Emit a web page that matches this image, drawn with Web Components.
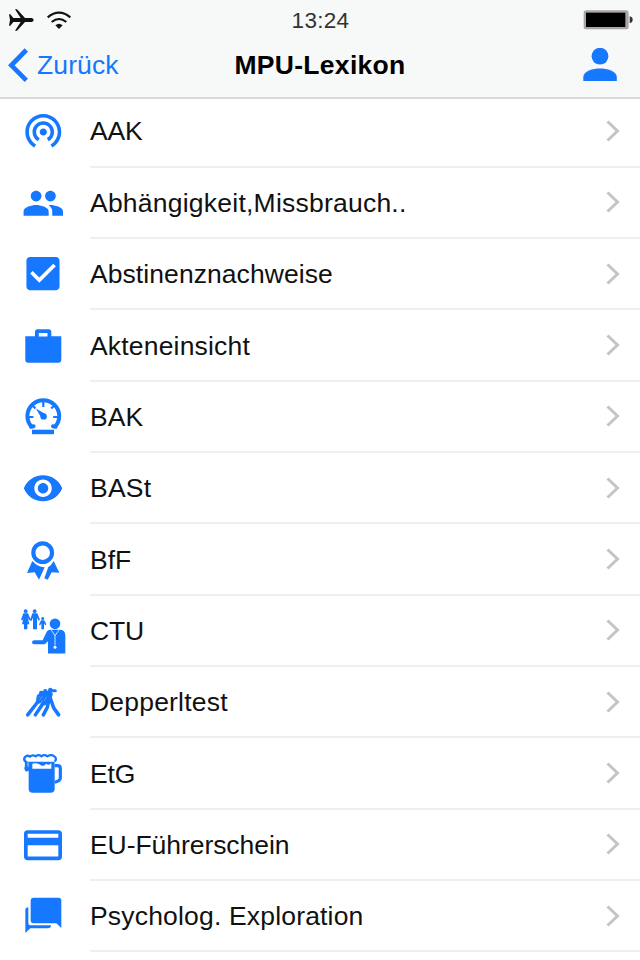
<!DOCTYPE html>
<html lang="de">
<head>
  <meta charset="utf-8">
  <title>MPU-Lexikon</title>
  <style>
    body {
      margin: 0;
      height: 960px;
      overflow: hidden;
      background: #fff;
      color: #111;
      font-family: "Liberation Sans", Arial, sans-serif;
    }
  </style>
</head>
<body>
  <mpu-header>
    <span slot="time">13:24</span>
    <span slot="back">Zurück</span>
    <span slot="title">MPU-Lexikon</span>
  </mpu-header>
  <mpu-list>
    <mpu-item icon="tether" style="--tracking: -.2px">AAK</mpu-item>
    <mpu-item icon="people" style="--tracking: .23px">Abhängigkeit,Missbrauch..</mpu-item>
    <mpu-item icon="check" style="--tracking: .07px">Abstinenznachweise</mpu-item>
    <mpu-item icon="work" style="--tracking: .18px">Akteneinsicht</mpu-item>
    <mpu-item icon="gauge" style="--tracking: .1px">BAK</mpu-item>
    <mpu-item icon="eye" style="--tracking: .2px">BASt</mpu-item>
    <mpu-item icon="ribbon" style="--tracking: 0">BfF</mpu-item>
    <mpu-item icon="doctor" style="--tracking: -.1px">CTU</mpu-item>
    <mpu-item icon="crowd" style="--tracking: .2px">Depperltest</mpu-item>
    <mpu-item icon="beer" style="--tracking: -.2px">EtG</mpu-item>
    <mpu-item icon="card" style="--tracking: -.06px">EU-Führerschein</mpu-item>
    <mpu-item icon="chat" style="--tracking: .18px">Psycholog. Exploration</mpu-item>
  </mpu-list>

  <script>
    'use strict';

    (function() {
      // row icons: [viewBox, markup], all painted with currentColor
      const icons = {
        tether: ['-1.5 -.89 26.67 26.67', '<path d="M12 11c-1.1 0-2 .9-2 2s.9 2 2 2 2-.9 2-2-.9-2-2-2zm6 2c0-3.31-2.69-6-6-6s-6 2.69-6 6c0 2.22 1.21 4.15 3 5.19l1-1.74c-1.19-.7-2-1.97-2-3.45 0-2.21 1.79-4 4-4s4 1.79 4 4c0 1.48-.81 2.75-2 3.45l1 1.74c1.79-1.04 3-2.97 3-5.19zM12 3C6.48 3 2 7.48 2 13c0 3.7 2.01 6.92 4.99 8.65l1-1.73C5.61 18.53 4 15.96 4 13c0-4.42 3.58-8 8-8s8 3.58 8 8c0 2.96-1.61 5.53-4 6.92l1 1.73c2.99-1.73 5-4.95 5-8.65 0-5.52-4.48-10-10-10z"/>'],
        people: ['-1.56 -1.56 26.8 26.8', '<path d="M16 11c1.66 0 2.99-1.34 2.99-3S17.66 5 16 5c-1.66 0-3 1.34-3 3s1.34 3 3 3zm-8 0c1.66 0 2.99-1.34 2.99-3S9.66 5 8 5C6.34 5 5 6.34 5 8s1.34 3 3 3zm0 2c-2.33 0-7 1.17-7 3.5V19h14v-2.5c0-2.33-4.67-3.5-7-3.5zm8 0c-.29 0-.62.02-.97.05 1.16.84 1.97 1.97 1.97 3.45V19h6v-2.5c0-2.33-4.67-3.5-7-3.5z"/>'],
        check: ['-1.04 -.84 26.1 26.1', '<path d="M19 3H5c-1.11 0-2 .9-2 2v14c0 1.1.89 2 2 2h14c1.11 0 2-.9 2-2V5c0-1.1-.89-2-2-2zm-9 14l-5-5 1.41-1.41L10 14.17l7.59-7.59L19 8l-9 9z"/>'],
        work: ['0 0 48 48', '<path fill-rule="evenodd" d="M6.3 14.3H16V10q0-2.7 2.7-2.7h10.9q2.7 0 2.7 2.7v4.3h10v23.400q0 3-3 3h-30q-3 0-3-3zM19.8 11v3.5h8.7V11z"/>'],
        gauge: ['0 0 48 48', '<path d="M12.400 33.600A15.900 15.900 0 1 1 36.200 33.600M12 33.800l2.600-.6M36.600 33.800l-2.600-.6" fill="none" stroke="currentColor" stroke-width="4" stroke-linecap="round"/><path d="M24.300 8v6M35.500 12l-3.300 3.400M13.100 12l3.300 3.400M9 24h5.400M34.200 24h5.400" stroke="currentColor" stroke-width="2.200"/><path d="M16.800 15.400l10 5.800-4 4.400z"/><circle cx="24.600" cy="23.400" r="3.200"/><path d="M13 36.700h22v4.500H13z"/>'],
        eye: ['-1.77 -1.9 27.5 27.5', '<path d="M12 4.5C7 4.5 2.73 7.61 1 12c1.73 4.39 6 7.5 11 7.5s9.27-3.11 11-7.5c-1.73-4.39-6-7.5-11-7.5zM12 17c-2.76 0-5-2.24-5-5s2.24-5 5-5 5 2.24 5 5-2.24 5-5 5zm0-8c-1.66 0-3 1.34-3 3s1.34 3 3 3 3-1.34 3-3-1.34-3-3-3z"/>'],
        ribbon: ['27 15 144 144', '<circle cx="98" cy="65" r="28" fill="none" stroke="currentColor" stroke-width="12.5"/><path d="M67 90L51 126 74 124 87 146 104 109Q82 107 67 90zM131 90L148 125 125 124 113 146 103 142 115 108Q125 102 131 90z"/>'],
        doctor: ['27 19.5 144 144', '<circle cx="47" cy="32" r="5.5"/><circle cx="74" cy="32" r="5.5"/><circle cx="98" cy="54" r="4.5"/><path d="M40 38h14l8 19-4 3-5-9 5 20h-6v15H42V71h-6l5-20-3 9-5-2zM67 38h15l8 20-4 3-5-9v34H69V52l-5 10-4-3zM93 59h10l6 12-3 3-4-5v17h-8V69l-4 6-3-3z"/><circle cx="135" cy="70" r="16"/><path d="M122 88h27q17 0 17 17v54h-52v-37l-10 9H73q-7 0-7-6t7-6h25l12-25q3-6 12-6z"/><path d="M124 89l11 16 12-16M135 104v31" fill="none" stroke="#cfe2ff" stroke-width="3"/><circle cx="135" cy="140" r="4.500" fill="#fff"/>'],
        crowd: ['27 8.4 144 144', '<g fill="none" stroke="currentColor" stroke-linecap="round" stroke-linejoin="round"><path d="M53 119L82 82l17-22M76 119l17-25 17-30M100 119l12-23 8-37M120 66l11 32 15 21" stroke-width="10.500"/><path d="M82 80l3-18 15-11 13 2 8-6h15" stroke-width="9"/><path d="M88 78l16-20M103 84l15-32M114 75l8-18" stroke-width="13"/></g><circle cx="93" cy="53" r="6"/><circle cx="106" cy="48" r="6.500"/><circle cx="121" cy="44" r="6.500"/><path d="M89 74l9-12M102 78l7-13" stroke="#8dbcff" stroke-width="1.500"/>'],
        beer: ['27 12 144 144', '<path d="M56 66V47h78v81q0 12-12 12H68q-12 0-12-12zM67 53v15h57V51q-7 9-16 2-8 12-20 2-10-5-21-2z" fill-rule="evenodd"/><path d="M52 74Q44 72 48 61V48Q39 41 45 33q7-7 15-1 7-7 17-1 9-7 17 0 9-7 18 0 12-7 21 0 9 7 1 15" fill="none" stroke="currentColor" stroke-width="7" stroke-linejoin="round"/><path d="M46 44v25q0 9 8 6l12-5V51z"/><path d="M56 40q9-3 16 0 9-4 18 0 9-4 18 0 8-4 20 0" fill="none" stroke="#fff" stroke-width="3.500"/><path d="M54 49v13" stroke="#fff" stroke-width="2"/><path d="M134 59h9q8 0 8 8v29q0 8-17 13" fill="none" stroke="currentColor" stroke-width="9.500"/>'],
        card: ['27 16.5 144 144', '<path fill-rule="evenodd" d="M53 44h92q11 0 11 11v68q0 11-11 11H53q-11 0-11-11V55q0-11 11-11zM53 55v12h92V55zM53 89v34h92V89z"/>'],
        chat: ['27 230 144 144', '<path d="M71 247h74q9 0 9 9v82l-15-14H71q-9 0-9-9v-59q0-9 9-9zM46 285q0-9 9-9v46q0 8 8 8h60q0 9-9 9H61l-15 14z"/>']
      };

      class MpuHeader extends HTMLElement {
        constructor() {
          super();
          const shadow = this.attachShadow({ mode: 'open' });
          shadow.innerHTML = `
            <style>
              :host {
                display: grid;
                grid-template-rows: 40px 57px;
                box-sizing: border-box;
                height: 99px;
                background: #f7f9f8;
                border-bottom: 2px solid #d9dada;
              }
              .bar {
                display: grid;
                grid-template-columns: 1fr auto 1fr;
                align-items: center;
              }
              .left, .right { display: flex; align-items: center; }
              .right { justify-content: flex-end; }
              .status { padding: 0 7px 0 8px; }
              .plane { margin-right: 13px; }
              .time { font-size: 22.5px; letter-spacing: .3px; color: #333; padding-top: 2px; }
              .nav { padding: 0 22px 7px 8px; color: #1677ff; }
              .back { font-size: 26.5px; letter-spacing: .1px; margin-left: 8px; }
              .title { font-size: 26.5px; font-weight: bold; letter-spacing: .3px; color: #000; padding-left: 14px; }
              svg { display: block; fill: currentColor; }
            </style>
            <div class="bar status">
              <div class="left">
                <svg class="plane" width="26" height="24" viewBox="0 0 78 72"><path d="M3 19h4l9 11h22L21 4h6l24 26h20q6 2 6 6t-6 6H51L27 68h-6l17-26H16L7 53H3l3-17z"/></svg>
                <svg width="24" height="20" viewBox="0 0 72 60"><g fill="none" stroke="currentColor" stroke-width="6.500"><path d="M2 22Q36-6 70 22M14 36q22-18 44 0"/></g><path d="M25 46q11-9 22 0L36 57z"/></svg>
              </div>
              <div class="time"><slot name="time"></slot></div>
              <div class="right">
                <svg width="50" height="22" viewBox="0 0 150 66"><rect x="2" y="4" width="135" height="57" rx="8" fill="#aaa5a5"/><rect x="9" y="11" width="118" height="43" fill="#000"/><path d="M140 22q9 2 9 10t-9 10z" fill="#333"/></svg>
              </div>
            </div>
            <div class="bar nav">
              <div class="left">
                <svg width="21" height="34" viewBox="0 0 63 102"><path d="M55 6L10 52l45 45" fill="none" stroke="currentColor" stroke-width="14"/></svg>
                <div class="back"><slot name="back"></slot></div>
              </div>
              <div class="title"><slot name="title"></slot></div>
              <div class="right">
                <svg width="36" height="34" viewBox="0 0 36 34"><circle cx="18" cy="8.2" r="8.4"/><path d="M1.3 33v-4C1.3 23 11 20.500 18 20.500s16.800 2.500 16.800 8.500v4z"/></svg>
              </div>
            </div>
          `;
        }
      }

      class MpuList extends HTMLElement {
        constructor() {
          super();
          const shadow = this.attachShadow({ mode: 'open' });
          // the first row starts slightly under the header
          shadow.innerHTML = `
            <style>
              :host {
                display: grid;
                grid-auto-rows: 71.35px;
                margin-top: -2.7px;
              }
            </style>
            <slot></slot>
          `;
        }
      }

      class MpuItem extends HTMLElement {
        constructor() {
          super();
          const shadow = this.attachShadow({ mode: 'open' });
          const [viewBox, markup] = icons[this.getAttribute('icon')];
          shadow.innerHTML = `
            <style>
              :host {
                display: grid;
                grid-template-columns: 48px 1fr;
                column-gap: 23px;
                padding-left: 19px;
                font-size: 26.5px;
                letter-spacing: var(--tracking, 0);
              }
              .icon { display: block; align-self: center; margin-top: -1px; color: #1677ff; fill: currentColor; }
              .body {
                display: flex;
                align-items: center;
                justify-content: space-between;
                padding-right: 20px;
                border-bottom: 2px solid #efefef;
              }
              .label { padding-top: 2px; white-space: nowrap; }
              .chevron { fill: none; stroke: #c4c4c6; stroke-width: 3; }
            </style>
            <svg class="icon" width="48" height="48" viewBox="${viewBox}">${markup}</svg>
            <div class="body">
              <span class="label"><slot></slot></span>
              <svg class="chevron" width="14" height="22" viewBox="0 0 14 22"><path d="M1.500 1.500L11.500 11 1.500 20.500"/></svg>
            </div>
          `;
        }
      }

      customElements.define('mpu-header', MpuHeader);
      customElements.define('mpu-list', MpuList);
      customElements.define('mpu-item', MpuItem);
    })();
  </script>
</body>
</html>
